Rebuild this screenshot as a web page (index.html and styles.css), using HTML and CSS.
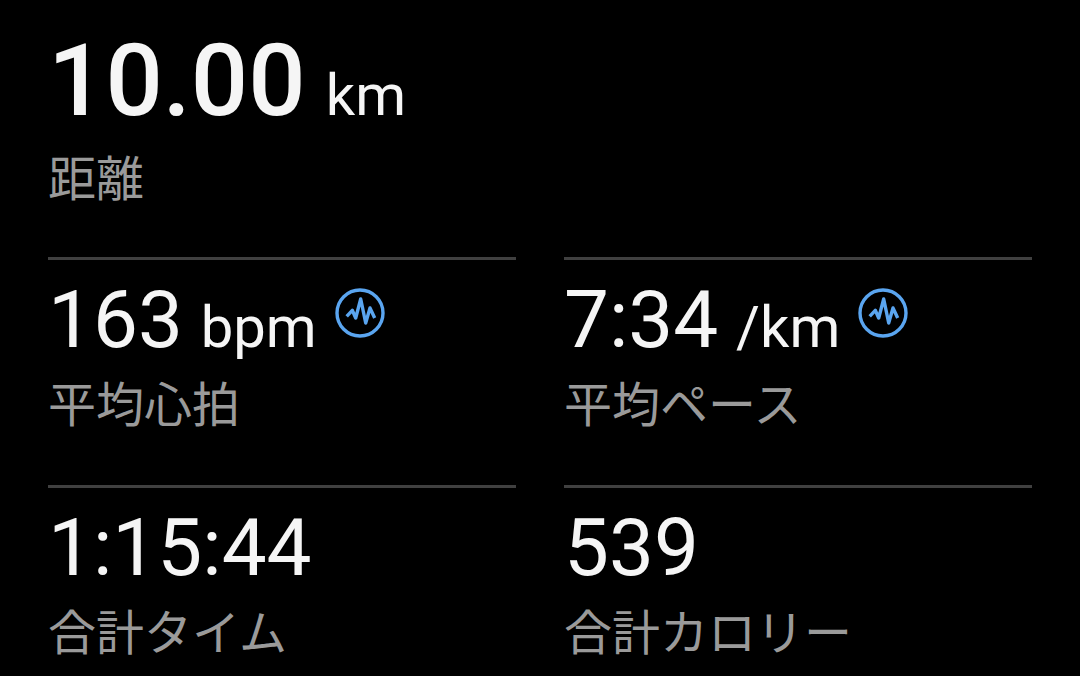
FILE: index.html
```html
<!DOCTYPE html>
<html lang="ja">
<head>
    <meta charset="UTF-8">
    <title>距離</title>
    <link rel="stylesheet" href="styles.css">
</head>
<body>
    <div class="summary">
        <div class="hero">
            <div class="value big">10.00 <span class="unit">km</span></div>
            <div class="label">距離</div>
        </div>
        <div class="grid">
            <div class="stat">
                <div class="value">163 <span class="unit">bpm</span>
                    <svg class="pulse" viewBox="0 0 52 52"><circle cx="26" cy="26" r="23" /><path d="M12.7 29.3l5.6-6 3.4 7.7 5-19 5 24 4.3-15 4.7 10" /></svg>
                </div>
                <div class="label">平均心拍</div>
            </div>
            <div class="stat">
                <div class="value">7:34 <span class="unit">/km</span>
                    <svg class="pulse" viewBox="0 0 52 52"><circle cx="26" cy="26" r="23" /><path d="M12.7 29.3l5.6-6 3.4 7.7 5-19 5 24 4.3-15 4.7 10" /></svg>
                </div>
                <div class="label">平均ペース</div>
            </div>
            <div class="stat">
                <div class="value">1:15:44</div>
                <div class="label">合計タイム</div>
            </div>
            <div class="stat">
                <div class="value">539</div>
                <div class="label">合計カロリー</div>
            </div>
        </div>
    </div>
</body>
</html>
```

FILE: styles.css
```css
body {
    margin: 0;
    background-color: #000;
    font-family: Roboto, "Noto Sans CJK JP", sans-serif;
}

.summary {
    padding: 0 48px;
}

.hero {
    height: 257px;
    padding-top: 26px;
    box-sizing: border-box;
}

.value {
    height: 97px;
    color: #f5f5f5;
    font-size: 80px;
    line-height: 90px;
    white-space: nowrap;
    word-spacing: -2px;
}

.big {
    height: auto;
    font-size: 101px;
    font-weight: 500;
    line-height: 110px;
    word-spacing: -5px;
}

.unit {
    font-size: 58px;
    font-weight: 400;
}

.label {
    color: #9a9a9a;
    font-size: 48px;
    line-height: 60px;
    margin-top: 4px;
}

.hero .label {
    margin-top: 0;
}

.grid {
    display: grid;
    grid-template-columns: 468px 468px;
    column-gap: 48px;
}

.stat {
    border-top: 3px solid #404040;
    padding: 15px 0 49px;
}

.stat:nth-child(n+3) {
    padding-bottom: 10px;
}

.pulse {
    width: 52px;
    height: 52px;
    margin-left: -1px;
    vertical-align: 8px;
    fill: none;
    stroke: #5aa5f0;
    stroke-width: 3.4;
    stroke-linejoin: round;
}
```
